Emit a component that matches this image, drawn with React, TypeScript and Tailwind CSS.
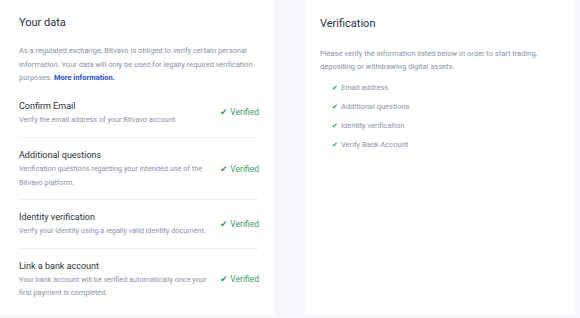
import React from "react";

const font = { fontFamily: "Roboto, 'Noto Sans', sans-serif" };

function Check({ className = "" }: { className?: string }) {
  return <span className={`text-[#3c9a5f] ${className}`}>✔</span>;
}

const rows = [
  { t: "Confirm Email", d: "Verify the email address of your Bitvavo account." },
  { t: "Additional questions", d: "Verification questions regarding your intended use of the Bitvavo platform." },
  { t: "Identity verification", d: "Verify your identity using a legally valid identity document." },
  { t: "Link a bank account", d: "Your bank account will be verified automatically once your first payment is completed." },
];

const list = ["Email address", "Additional questions", "Identity verification", "Verify Bank Account"];

export default function App() {
  return (
    <div className="flex h-[318px] w-[580px] bg-[#f6f7fb] gap-[31px] overflow-hidden" style={font}>
      <div className="w-[274px] h-[315px] bg-white pl-[19px] pr-[15px] pt-[15px]">
        <h2 className="text-[11px] leading-[16px] text-[#2a2f3a]">Your data</h2>
        <p className="mt-[13px] text-[7.5px] leading-[13.5px] text-[#8a93a5]">
          As a regulated exchange, Bitvavo is obliged to verify certain personal information. Your data will only be used for legally required verification purposes.{" "}
          <span className="text-[#1f4fd8] font-bold">More information.</span>
        </p>
        <div className="mt-[15px]">
          {rows.map((r, i) => (
            <div
              key={r.t}
              className={`flex items-center justify-between ${i < rows.length - 1 ? "border-b border-[#f0f1f4]" : ""} ${i === 0 ? "pt-0 pb-[11px]" : "pt-[11px] pb-[10px]"}`}
            >
              <div className="w-[200px]">
                <div className="text-[9px] leading-[13px] text-[#2a2f3a]">{r.t}</div>
                <div className="text-[7.3px] leading-[13.5px] text-[#8a93a5]">{r.d}</div>
              </div>
              <div className="text-[8.5px] text-[#3c9a5f] whitespace-nowrap">
                <Check /> Verified
              </div>
            </div>
          ))}
        </div>
      </div>
      <div className="w-[270px] h-[315px] bg-white px-[15px] pt-[16px]">
        <h2 className="text-[11px] leading-[16px] text-[#2a2f3a]">Verification</h2>
        <p className="mt-[15px] text-[7.5px] leading-[13px] text-[#8a93a5]">
          Please verify the information listed below in order to start trading, depositing or withdrawing digital assets.
        </p>
        <ul className="mt-[8px] pl-[12px] flex flex-col gap-[5px]">
          {list.map((l) => (
            <li key={l} className="text-[7.5px] leading-[14px] text-[#8a93a5] flex items-center gap-[3px]">
              <Check className="text-[7px]" /> {l}
            </li>
          ))}
        </ul>
      </div>
    </div>
  );
}
